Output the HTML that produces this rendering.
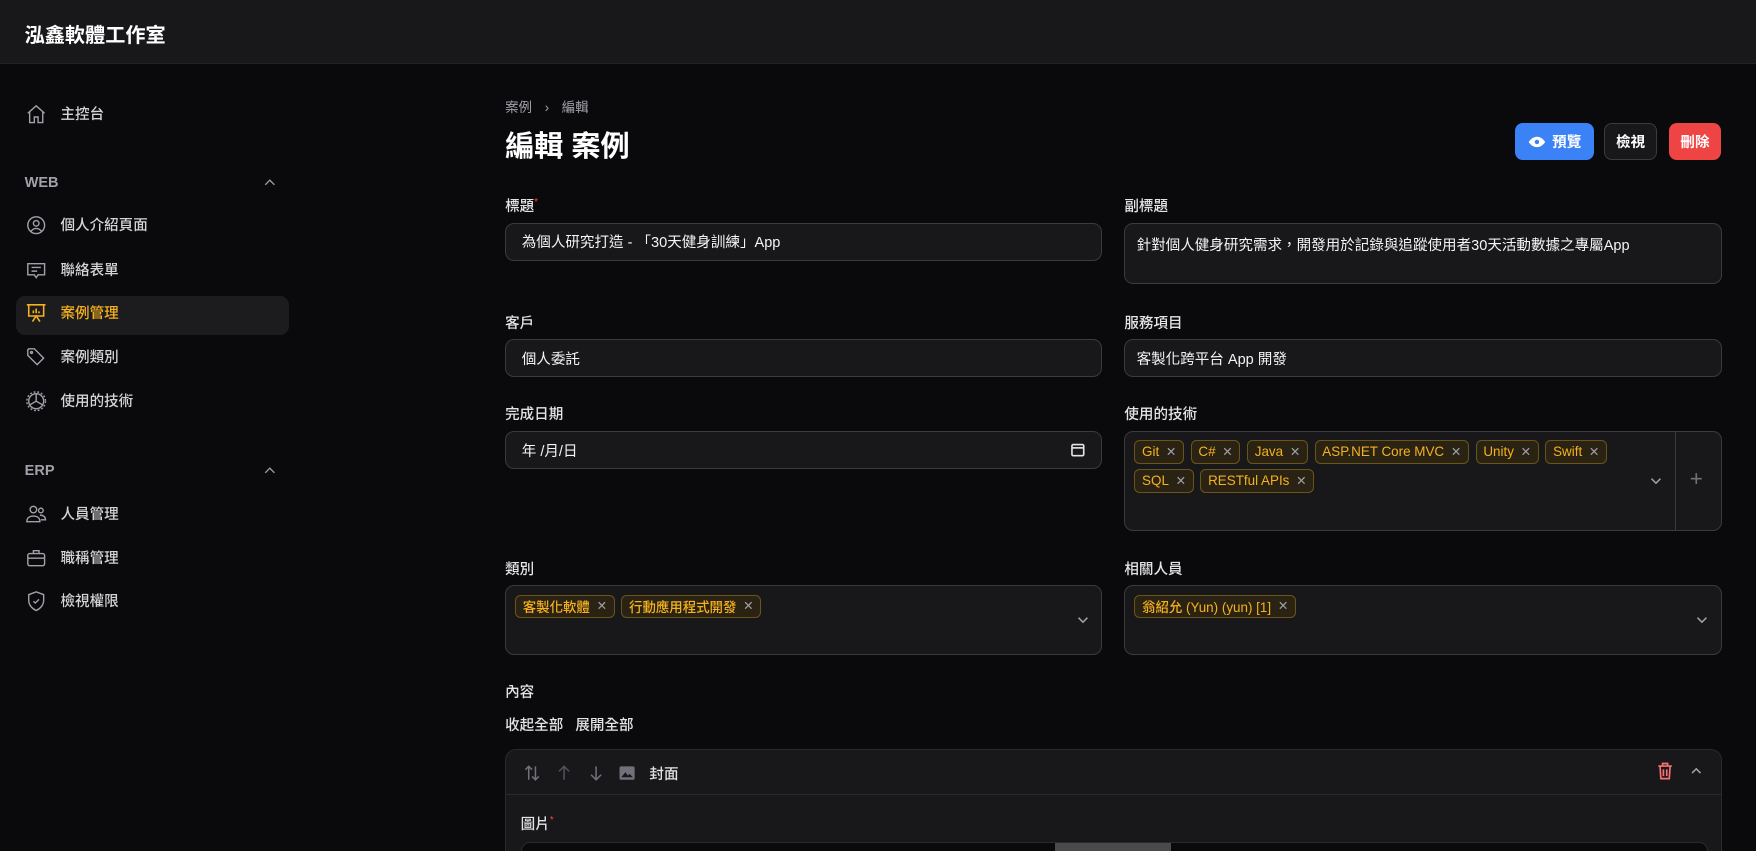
<!DOCTYPE html>
<html><head><meta charset="utf-8"><style>
*{box-sizing:border-box;margin:0;padding:0}
html,body{width:1756px;height:851px;overflow:hidden;background:#0a0a0c}
body{font-family:"Liberation Sans","Noto Sans CJK TC",sans-serif;color:#e4e4e7}
#w{zoom:1.1199;width:1568px;height:760px;position:relative;background:#0a0a0c}
.a{position:absolute}
.hdr{left:0;top:0;width:1568px;height:57px;background:#18181b;border-bottom:1px solid #232326}
.nav{font-size:13px;font-weight:500;color:#d4d4d8;height:20px;line-height:20px}
.nav svg{position:absolute;left:-32px;top:-1px}
.grp{font-size:13px;font-weight:600;color:#a1a1aa}
.lbl{font-size:13px;font-weight:500;color:#e4e4e7}
.in{background:#18181b;border:1px solid #3a3a3f;border-radius:8px;font-size:13px;color:#f4f4f5;padding:0 14px;display:flex;align-items:center}
.tag{display:inline-flex;align-items:center;height:21px;padding:0 6px;margin:0 6px 5px 0;background:#2a2314;border:1px solid #6b5417;border-radius:5px;color:#f5b11e;font-size:12px;font-weight:500}
.tag:after{content:"✕";color:#a1a1aa;font-size:11px;margin-left:6px;font-weight:400}
.btn{height:33px;border-radius:7px;font-size:13px;font-weight:700;display:flex;align-items:center;justify-content:center;color:#fff}
</style></head><body><div id="w">
<div class="a hdr"></div>
<div class="a" style="left:22px;top:17px;font-size:18px;font-weight:700;color:#fff">泓鑫軟體工作室</div>

<div class="a" style="left:14px;top:264px;width:244px;height:35px;background:#1c1c1f;border-radius:8px"></div>
<div class="a nav" style="left:54px;top:93px"><svg width="20" height="20" viewBox="0 0 24 24" fill="none" stroke="#a1a1aa" stroke-width="1.5"><path d="M3 11l9-8 9 8M5 9.5V21h5v-6h4v6h5V9.5"/></svg>主控台</div>
<div class="a grp" style="left:22px;top:156px">WEB</div>
<svg class="a" style="left:234px;top:156px" width="14" height="14" viewBox="0 0 24 24" fill="none" stroke="#a1a1aa" stroke-width="2"><path d="M5 15l7-7 7 7"/></svg>
<div class="a nav" style="left:54px;top:192px"><svg width="20" height="20" viewBox="0 0 24 24" fill="none" stroke="#a1a1aa" stroke-width="1.5"><circle cx="12" cy="12" r="9"/><circle cx="12" cy="10" r="3"/><path d="M6.5 18.5c1.5-2 3.3-3 5.5-3s4 1 5.5 3"/></svg>個人介紹頁面</div>
<div class="a nav" style="left:54px;top:232px"><svg width="20" height="20" viewBox="0 0 24 24" fill="none" stroke="#a1a1aa" stroke-width="1.5"><path d="M3 5h18v12h-7l-2 3-2-3H3z"/><path d="M7 9h10M7 13h6"/></svg>聯絡表單</div>
<div class="a nav" style="left:54px;top:271px;color:#f5b11e"><svg width="20" height="20" viewBox="0 0 24 24" fill="none" stroke="#f5b11e" stroke-width="1.7"><path d="M2 3h20M4 3v12h16V3M8 21l4-6 4 6M9 12V9M12 12V7M15 12V10"/></svg>案例管理</div>
<div class="a nav" style="left:54px;top:310px"><svg width="20" height="20" viewBox="0 0 24 24" fill="none" stroke="#a1a1aa" stroke-width="1.5"><path d="M3 4v6l10 10 7-7L10 3H4z"/><circle cx="7" cy="7" r="1"/></svg>案例類別</div>
<div class="a nav" style="left:54px;top:349px"><svg width="20" height="20" viewBox="0 0 24 24" fill="none" stroke="#a1a1aa" stroke-width="1.5"><circle cx="12" cy="12" r="8"/><path d="M12 12V4M12 12l7 4M12 12l-7 4"/><circle cx="12" cy="12" r="10" stroke-dasharray="2 2"/></svg>使用的技術</div>
<div class="a grp" style="left:22px;top:413px">ERP</div>
<svg class="a" style="left:234px;top:413px" width="14" height="14" viewBox="0 0 24 24" fill="none" stroke="#a1a1aa" stroke-width="2"><path d="M5 15l7-7 7 7"/></svg>
<div class="a nav" style="left:54px;top:450px"><svg width="20" height="20" viewBox="0 0 24 24" fill="none" stroke="#a1a1aa" stroke-width="1.5"><circle cx="9" cy="7" r="3.5"/><circle cx="17" cy="8" r="2.5"/><path d="M2 20c0-4 3-6 7-6s7 2 7 6zM16 13c3 0 6 1.5 6 5h-5"/></svg>人員管理</div>
<div class="a nav" style="left:54px;top:489px"><svg width="20" height="20" viewBox="0 0 24 24" fill="none" stroke="#a1a1aa" stroke-width="1.5"><rect x="3" y="7" width="18" height="13" rx="2"/><path d="M9 7V4h6v3M3 12h18"/></svg>職稱管理</div>
<div class="a nav" style="left:54px;top:528px"><svg width="20" height="20" viewBox="0 0 24 24" fill="none" stroke="#a1a1aa" stroke-width="1.5"><path d="M12 2l8 3v6c0 5-3.5 9-8 11-4.5-2-8-6-8-11V5z"/><path d="M9 12l2 2 4-4"/></svg>檢視權限</div>

<div class="a" style="left:451px;top:86px;font-size:12px;color:#a1a1aa">案例 <span style="margin:0 8px">›</span> 編輯</div>
<div class="a" style="left:451px;top:110px;font-size:26px;font-weight:700;color:#fff">編輯 案例</div>
<div class="a btn" style="left:1353px;top:110px;width:70px;background:#3b82f6"><svg width="16" height="16" viewBox="0 0 24 24" style="margin-right:6px"><path d="M1 12s4-7 11-7 11 7 11 7-4 7-11 7S1 12 1 12z" fill="#fff"/><circle cx="12" cy="12" r="3" fill="#3b82f6"/></svg>預覽</div>
<div class="a btn" style="left:1432px;top:110px;width:48px;background:#18181b;border:1px solid #3a3a3f">檢視</div>
<div class="a btn" style="left:1490px;top:110px;width:47px;background:#ef4444">刪除</div>

<div class="a lbl" style="left:451px;top:174px">標題<sup style="color:#ef4444;font-size:9px">*</sup></div>
<div class="a in" style="left:451px;top:199px;width:533px;height:34px">為個人研究打造 - 「30天健身訓練」App</div>
<div class="a lbl" style="left:1004px;top:174px">副標題</div>
<div class="a in" style="left:1004px;top:199px;width:534px;height:55px;align-items:flex-start;padding-top:9px;padding-left:10px">針對個人健身研究需求，開發用於記錄與追蹤使用者30天活動數據之專屬App</div>

<div class="a lbl" style="left:451px;top:279px">客戶</div>
<div class="a in" style="left:451px;top:303px;width:533px;height:34px">個人委託</div>
<div class="a lbl" style="left:1004px;top:279px">服務項目</div>
<div class="a in" style="left:1004px;top:303px;width:534px;height:34px;padding-left:10px">客製化跨平台 App 開發</div>

<div class="a lbl" style="left:451px;top:360px">完成日期</div>
<div class="a in" style="left:451px;top:385px;width:533px;height:34px">年 /月/日<svg style="margin-left:auto" width="14" height="14" viewBox="0 0 24 24" fill="none" stroke="#e4e4e7" stroke-width="2.5"><rect x="3" y="4" width="18" height="17" rx="2"/><path d="M3 9h18"/></svg></div>
<div class="a lbl" style="left:1004px;top:360px">使用的技術</div>
<div class="a in" style="left:1004px;top:385px;width:534px;height:89px;display:block;padding:7px 0 0 8px">
<span class="tag">Git</span><span class="tag">C#</span><span class="tag">Java</span><span class="tag">ASP.NET Core MVC</span><span class="tag">Unity</span><span class="tag">Swift</span><br><span class="tag">SQL</span><span class="tag">RESTful APIs</span>
<svg class="a" style="left:466px;top:36px" width="16" height="16" viewBox="0 0 24 24" fill="none" stroke="#a1a1aa" stroke-width="2"><path d="M6 9l6 6 6-6"/></svg>
<div class="a" style="left:491px;top:0;width:1px;height:87px;background:#3a3a3f"></div>
<div class="a" style="left:504px;top:30px;font-size:20px;color:#71717a;font-weight:300">+</div>
</div>

<div class="a lbl" style="left:451px;top:498px">類別</div>
<div class="a in" style="left:451px;top:522px;width:533px;height:63px;display:block;padding:8px 0 0 8px"><span class="tag">客製化軟體</span><span class="tag">行動應用程式開發</span>
<svg class="a" style="left:507px;top:23px" width="16" height="16" viewBox="0 0 24 24" fill="none" stroke="#a1a1aa" stroke-width="2"><path d="M6 9l6 6 6-6"/></svg></div>
<div class="a lbl" style="left:1004px;top:498px">相關人員</div>
<div class="a in" style="left:1004px;top:522px;width:534px;height:63px;display:block;padding:8px 0 0 8px"><span class="tag">翁紹允 (Yun) (yun) [1]</span>
<svg class="a" style="left:507px;top:23px" width="16" height="16" viewBox="0 0 24 24" fill="none" stroke="#a1a1aa" stroke-width="2"><path d="M6 9l6 6 6-6"/></svg></div>

<div class="a lbl" style="left:451px;top:608px">內容</div>
<div class="a lbl" style="left:451px;top:638px">收起全部 &nbsp; 展開全部</div>

<div class="a" style="left:451px;top:669px;width:1087px;height:100px;background:#18181b;border:1px solid #2a2a2e;border-radius:10px 10px 0 0">
 <div class="a" style="left:0;top:39px;width:1085px;height:1px;background:#2a2a2e"></div>
 <svg class="a" style="left:14px;top:11px" width="18" height="18" viewBox="0 0 24 24" fill="none" stroke="#71717a" stroke-width="1.8"><path d="M8 20V4M4 8l4-4 4 4M16 4v16M12 16l4 4 4-4"/></svg>
 <svg class="a" style="left:43px;top:11px" width="18" height="18" viewBox="0 0 24 24" fill="none" stroke="#52525b" stroke-width="1.8"><path d="M12 20V4M6 10l6-6 6 6"/></svg>
 <svg class="a" style="left:71px;top:11px" width="18" height="18" viewBox="0 0 24 24" fill="none" stroke="#71717a" stroke-width="1.8"><path d="M12 4v16M6 14l6 6 6-6"/></svg>
 <svg class="a" style="left:99px;top:11px" width="18" height="18" viewBox="0 0 24 24"><rect x="3" y="4" width="18" height="16" rx="2" fill="#71717a"/><path d="M5 17l5-6 3 4 2-2 4 4z" fill="#18181b"/></svg>
 <div class="a lbl" style="left:128px;top:11px">封面</div>
 <svg class="a" style="left:1026px;top:10px" width="18" height="18" viewBox="0 0 24 24" fill="none" stroke="#f87171" stroke-width="2"><path d="M4 6h16M9 6V3h6v3M6 6l1 15h10l1-15M10 10v8M14 10v8"/></svg>
 <svg class="a" style="left:1056px;top:12px" width="13" height="13" viewBox="0 0 24 24" fill="none" stroke="#a1a1aa" stroke-width="2.5"><path d="M5 15l7-7 7 7"/></svg>
 <div class="a lbl" style="left:13px;top:56px">圖片<sup style="color:#ef4444;font-size:9px">*</sup></div>
 <div class="a" style="left:13px;top:82px;width:1060px;height:20px;background:#0a0a0c;border:1px solid #2a2a2e;border-radius:8px 8px 0 0"></div>
 <div class="a" style="left:490px;top:83px;width:104px;height:16px;background:#4a4a4a"></div>
</div>
</div></body></html>
